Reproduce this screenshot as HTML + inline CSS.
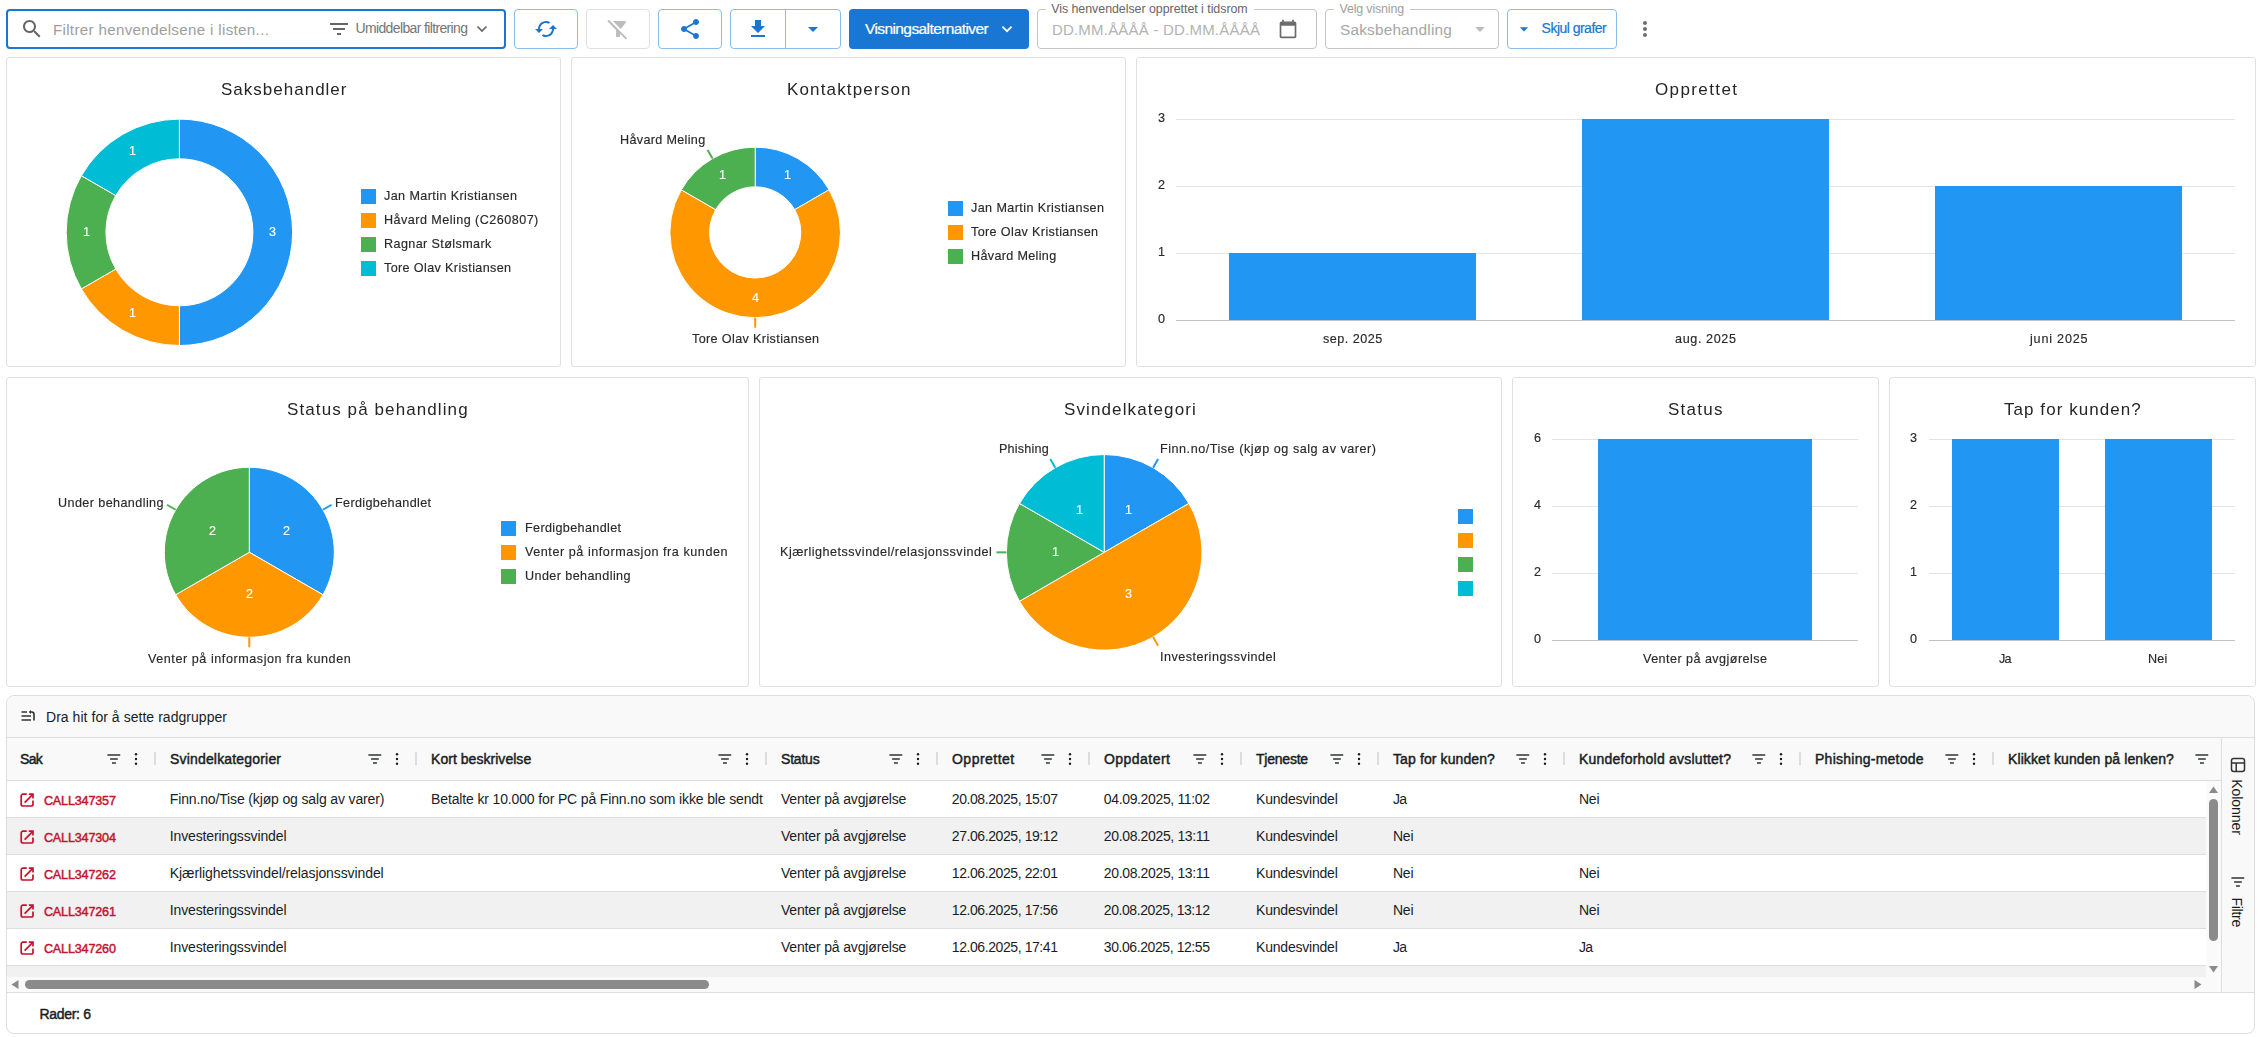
<!DOCTYPE html>
<html lang="no"><head><meta charset="utf-8"><title>Henvendelser</title>
<style>
html,body{margin:0;padding:0;background:#fff;}
body{width:2260px;height:1037px;position:relative;overflow:hidden;font-family:"Liberation Sans", sans-serif;}
.t{position:absolute;white-space:nowrap;line-height:1;font-family:"Liberation Sans", sans-serif;}
svg{display:block;overflow:visible;}
</style></head><body>
<div style="position:absolute;left:6px;top:9px;width:500px;height:40px;box-sizing:border-box;border:2px solid #1976d2;border-radius:4px;background:#fff;"></div>
<svg style="position:absolute;left:20px;top:17px;" width="24" height="24" viewBox="0 0 24 24"><path d="M15.5 14h-.79l-.28-.27C15.41 12.59 16 11.11 16 9.5 16 5.91 13.09 3 9.5 3S3 5.91 3 9.5 5.91 16 9.5 16c1.61 0 3.09-.59 4.23-1.57l.27.28v.79l5 4.99L20.49 19l-4.99-5zm-6 0C7.01 14 5 11.99 5 9.5S7.01 5 9.5 5 14 7.01 14 9.5 11.99 14 9.5 14z" fill="#666"/></svg>
<div class="t" style="left:52.90px;top:22.00px;font-size:15.2px;color:#9e9e9e;letter-spacing:0.313px;">Filtrer henvendelsene i listen...</div>
<svg style="position:absolute;left:327px;top:17px;" width="24" height="24" viewBox="0 0 24 24"><path d="M10 18h4v-2h-4v2zM3 6v2h18V6H3zm3 7h12v-2H6v2z" fill="#666"/></svg>
<div class="t" style="left:355.50px;top:21.00px;font-size:14px;color:#757575;letter-spacing:-0.638px;">Umiddelbar filtrering</div>
<svg style="position:absolute;left:474px;top:22px;" width="16" height="14" viewBox="0 0 16 14"><path d="M3.5 4.5L8 9l4.5-4.5" fill="none" stroke="#666" stroke-width="1.7"/></svg>
<div style="position:absolute;left:514px;top:9px;width:64px;height:40px;box-sizing:border-box;border:1px solid #8cbbe9;border-radius:4px;background:#fff;"></div>
<svg style="position:absolute;left:534px;top:17px;" width="24" height="24" viewBox="0 0 24 24"><path d="M19 8l-4 4h3c0 3.31-2.69 6-6 6-1.01 0-1.97-.25-2.8-.7l-1.46 1.46C8.97 19.54 10.43 20 12 20c4.42 0 8-3.58 8-8h3l-4-4zM6 12c0-3.31 2.69-6 6-6 1.01 0 1.97.25 2.8.7l1.46-1.46C15.03 4.46 13.57 4 12 4c-4.42 0-8 3.58-8 8H1l4 4 4-4H6z" fill="#1976d2"/></svg>
<div style="position:absolute;left:586px;top:9px;width:64px;height:40px;box-sizing:border-box;border:1px solid #e0e0e0;border-radius:4px;background:#fff;"></div>
<svg style="position:absolute;left:606px;top:17px;" width="24" height="24" viewBox="0 0 24 24"><path d="M19.79 5.61C20.3 4.95 19.83 4 19 4H6.83l7.97 7.97 4.99-6.36zM2.81 2.81 1.39 4.22 10 13v6c0 .55.45 1 1 1h2c.55 0 1-.45 1-1v-2.17l5.78 5.78 1.41-1.41L2.81 2.81z" fill="#bdbdbd"/></svg>
<div style="position:absolute;left:658px;top:9px;width:64px;height:40px;box-sizing:border-box;border:1px solid #8cbbe9;border-radius:4px;background:#fff;"></div>
<svg style="position:absolute;left:678px;top:17px;" width="24" height="24" viewBox="0 0 24 24"><path d="M18 16.08c-.76 0-1.44.3-1.96.77L8.91 12.7c.05-.23.09-.46.09-.7s-.04-.47-.09-.7l7.05-4.11c.54.5 1.25.81 2.04.81 1.66 0 3-1.34 3-3s-1.34-3-3-3-3 1.34-3 3c0 .24.04.47.09.7L8.04 9.81C7.5 9.31 6.79 9 6 9c-1.66 0-3 1.34-3 3s1.34 3 3 3c.79 0 1.5-.31 2.04-.81l7.12 4.16c-.05.21-.08.43-.08.65 0 1.61 1.31 2.92 2.92 2.92 1.61 0 2.92-1.31 2.92-2.92s-1.31-2.92-2.92-2.92z" fill="#1976d2"/></svg>
<div style="position:absolute;left:730px;top:9px;width:111px;height:40px;box-sizing:border-box;border:1px solid #8cbbe9;border-radius:4px;background:#fff;"></div>
<div style="position:absolute;left:785px;top:9px;width:1px;height:40px;box-sizing:border-box;background:#8cbbe9;"></div>
<svg style="position:absolute;left:746px;top:17px;" width="24" height="24" viewBox="0 0 24 24"><path d="M5 20h14v-2H5v2zM19 9h-4V3H9v6H5l7 7 7-7z" fill="#1976d2"/></svg>
<svg style="position:absolute;left:801px;top:17px;" width="24" height="24" viewBox="0 0 24 24"><path d="M7 10l5 5 5-5z" fill="#1976d2"/></svg>
<div style="position:absolute;left:849px;top:9px;width:180px;height:40px;box-sizing:border-box;background:#1976d2;border-radius:4px;"></div>
<div class="t" style="left:865.00px;top:21.00px;font-size:15.5px;color:#fff;letter-spacing:-0.594px;-webkit-text-stroke:0.22px currentColor;">Visningsalternativer</div>
<svg style="position:absolute;left:999px;top:22px;" width="16" height="14" viewBox="0 0 16 14"><path d="M3.400 4.600L8 9.200l4.600-4.600" fill="none" stroke="#fff" stroke-width="1.700"/></svg>
<div style="position:absolute;left:1037px;top:9px;width:280px;height:40px;box-sizing:border-box;border:1px solid #c4c4c4;border-radius:4px;background:#fff;"></div>
<div style="position:absolute;left:1046px;top:8px;width:207.5px;height:3px;box-sizing:border-box;background:#fff;"></div>
<div class="t" style="left:1051.20px;top:3.00px;font-size:12.4px;color:#666;letter-spacing:-0.027px;">Vis henvendelser opprettet i tidsrom</div>
<div class="t" style="left:1051.90px;top:22.00px;font-size:15px;color:#b3b3b3;letter-spacing:0.211px;">DD.MM.ÅÅÅÅ - DD.MM.ÅÅÅÅ</div>
<svg style="position:absolute;left:1278px;top:19px;" width="20" height="20" viewBox="0 0 24 24"><path d="M20 3h-1V1h-2v2H7V1H5v2H4c-1.1 0-2 .9-2 2v16c0 1.1.9 2 2 2h16c1.1 0 2-.9 2-2V5c0-1.1-.9-2-2-2zm0 18H4V8h16v13z" fill="#6b6b6b"/></svg>
<div style="position:absolute;left:1325px;top:9px;width:174px;height:40px;box-sizing:border-box;border:1px solid #c4c4c4;border-radius:4px;background:#fff;"></div>
<div style="position:absolute;left:1333.5px;top:8px;width:76px;height:3px;box-sizing:border-box;background:#fff;"></div>
<div class="t" style="left:1339.50px;top:3.00px;font-size:12.4px;color:#a0a0a0;letter-spacing:-0.139px;">Velg visning</div>
<div class="t" style="left:1340.00px;top:22.00px;font-size:15.4px;color:#a6a6a6;letter-spacing:0.175px;">Saksbehandling</div>
<svg style="position:absolute;left:1468px;top:17px;" width="24" height="24" viewBox="0 0 24 24"><path d="M7 10l5 5 5-5z" fill="#bdbdbd"/></svg>
<div style="position:absolute;left:1507px;top:9px;width:110px;height:40px;box-sizing:border-box;border:1px solid #8cbbe9;border-radius:4px;background:#fff;"></div>
<svg style="position:absolute;left:1514.1px;top:18.7px;" width="20" height="20" viewBox="0 0 24 24"><path d="M7 10l5 5 5-5z" fill="#1976d2"/></svg>
<div class="t" style="left:1541.60px;top:21.00px;font-size:14px;color:#1976d2;letter-spacing:-0.519px;-webkit-text-stroke:0.22px currentColor;">Skjul grafer</div>
<svg style="position:absolute;left:1633px;top:17px;" width="24" height="24" viewBox="0 0 24 24"><path d="M12 8c1.1 0 2-.9 2-2s-.9-2-2-2-2 .9-2 2 .9 2 2 2zm0 2c-1.1 0-2 .9-2 2s.9 2 2 2 2-.9 2-2-.9-2-2-2zm0 6c-1.1 0-2 .9-2 2s.9 2 2 2 2-.9 2-2-.9-2-2-2z" fill="#6e6e6e"/></svg>
<div style="position:absolute;left:6px;top:57px;width:555px;height:310px;box-sizing:border-box;border:1px solid #e0e0e0;border-radius:3px;background:#fff;"></div>
<div style="position:absolute;left:571px;top:57px;width:555px;height:310px;box-sizing:border-box;border:1px solid #e0e0e0;border-radius:3px;background:#fff;"></div>
<div style="position:absolute;left:1136px;top:57px;width:1120px;height:310px;box-sizing:border-box;border:1px solid #e0e0e0;border-radius:3px;background:#fff;"></div>
<div style="position:absolute;left:6px;top:377px;width:743px;height:310px;box-sizing:border-box;border:1px solid #e0e0e0;border-radius:3px;background:#fff;"></div>
<div style="position:absolute;left:759px;top:377px;width:743px;height:310px;box-sizing:border-box;border:1px solid #e0e0e0;border-radius:3px;background:#fff;"></div>
<div style="position:absolute;left:1512px;top:377px;width:367px;height:310px;box-sizing:border-box;border:1px solid #e0e0e0;border-radius:3px;background:#fff;"></div>
<div style="position:absolute;left:1889px;top:377px;width:367px;height:310px;box-sizing:border-box;border:1px solid #e0e0e0;border-radius:3px;background:#fff;"></div>
<div class="t" style="left:221.15px;top:81.00px;font-size:17.0px;color:#262626;letter-spacing:1.007px;will-change:transform;">Saksbehandler</div>
<div class="t" style="left:786.65px;top:81.00px;font-size:17.0px;color:#262626;letter-spacing:1.156px;will-change:transform;">Kontaktperson</div>
<div class="t" style="left:1654.80px;top:81.00px;font-size:17.0px;color:#262626;letter-spacing:1.391px;will-change:transform;">Opprettet</div>
<div class="t" style="left:286.80px;top:401.00px;font-size:17.0px;color:#262626;letter-spacing:1.098px;will-change:transform;">Status på behandling</div>
<div class="t" style="left:1064.40px;top:401.00px;font-size:17.0px;color:#262626;letter-spacing:1.112px;will-change:transform;">Svindelkategori</div>
<div class="t" style="left:1668.00px;top:401.00px;font-size:17.0px;color:#262626;letter-spacing:1.241px;will-change:transform;">Status</div>
<div class="t" style="left:2004.05px;top:401.00px;font-size:17.0px;color:#262626;letter-spacing:1.056px;will-change:transform;">Tap for kunden?</div>
<svg style="position:absolute;left:6px;top:57px;" width="555" height="310" viewBox="0 0 555 310"><path d="M173.40 62.10A113.2 113.2 0 0 1 173.40 288.50L173.40 248.80A73.5 73.5 0 0 0 173.40 101.80Z" fill="#2196f3" stroke="#fff" stroke-width="1" stroke-linejoin="round"/><path d="M173.40 288.50A113.2 113.2 0 0 1 75.37 231.90L109.75 212.05A73.5 73.5 0 0 0 173.40 248.80Z" fill="#ff9800" stroke="#fff" stroke-width="1" stroke-linejoin="round"/><path d="M75.37 231.90A113.2 113.2 0 0 1 75.37 118.70L109.75 138.55A73.5 73.5 0 0 0 109.75 212.05Z" fill="#4caf50" stroke="#fff" stroke-width="1" stroke-linejoin="round"/><path d="M75.37 118.70A113.2 113.2 0 0 1 173.40 62.10L173.40 101.80A73.5 73.5 0 0 0 109.75 138.55Z" fill="#00bcd4" stroke="#fff" stroke-width="1" stroke-linejoin="round"/></svg>
<div class="t" style="left:269.25px;top:226.00px;font-size:12.6px;color:#fff;-webkit-text-stroke:0.16px currentColor;will-change:transform;">3</div>
<div class="t" style="left:129.22px;top:307.00px;font-size:12.6px;color:#fff;-webkit-text-stroke:0.16px currentColor;will-change:transform;">1</div>
<div class="t" style="left:82.55px;top:226.00px;font-size:12.6px;color:#fff;-webkit-text-stroke:0.16px currentColor;will-change:transform;">1</div>
<div class="t" style="left:129.22px;top:145.00px;font-size:12.6px;color:#fff;-webkit-text-stroke:0.16px currentColor;will-change:transform;">1</div>
<div style="position:absolute;left:361px;top:189px;width:15px;height:15px;box-sizing:border-box;background:#2196f3;"></div>
<div class="t" style="left:384.30px;top:190.00px;font-size:12.6px;color:#2a2a2a;letter-spacing:0.400px;-webkit-text-stroke:0.16px currentColor;will-change:transform;">Jan Martin Kristiansen</div>
<div style="position:absolute;left:361px;top:213px;width:15px;height:15px;box-sizing:border-box;background:#ff9800;"></div>
<div class="t" style="left:384.30px;top:214.00px;font-size:12.6px;color:#2a2a2a;letter-spacing:0.459px;-webkit-text-stroke:0.16px currentColor;will-change:transform;">Håvard Meling (C260807)</div>
<div style="position:absolute;left:361px;top:237px;width:15px;height:15px;box-sizing:border-box;background:#4caf50;"></div>
<div class="t" style="left:384.30px;top:238.00px;font-size:12.6px;color:#2a2a2a;letter-spacing:0.395px;-webkit-text-stroke:0.16px currentColor;will-change:transform;">Ragnar Stølsmark</div>
<div style="position:absolute;left:361px;top:261px;width:15px;height:15px;box-sizing:border-box;background:#00bcd4;"></div>
<div class="t" style="left:384.30px;top:262.00px;font-size:12.6px;color:#2a2a2a;letter-spacing:0.371px;-webkit-text-stroke:0.16px currentColor;will-change:transform;">Tore Olav Kristiansen</div>
<svg style="position:absolute;left:571px;top:57px;" width="555" height="310" viewBox="0 0 555 310"><path d="M184.20 90.15A85.3 85.3 0 0 1 258.07 132.80L223.69 152.65A45.6 45.6 0 0 0 184.20 129.85Z" fill="#2196f3" stroke="#fff" stroke-width="1" stroke-linejoin="round"/><path d="M258.07 132.80A85.3 85.3 0 1 1 110.33 132.80L144.71 152.65A45.6 45.6 0 1 0 223.69 152.65Z" fill="#ff9800" stroke="#fff" stroke-width="1" stroke-linejoin="round"/><path d="M110.33 132.80A85.3 85.3 0 0 1 184.20 90.15L184.20 129.85A45.6 45.6 0 0 0 144.71 152.65Z" fill="#4caf50" stroke="#fff" stroke-width="1" stroke-linejoin="round"/><path d="M184.20 260.75L184.20 270.75" stroke="#ff9800" stroke-width="2" fill="none"/><path d="M141.55 101.58L136.55 92.92" stroke="#4caf50" stroke-width="2" fill="none"/></svg>
<div class="t" style="left:784.42px;top:169.00px;font-size:12.6px;color:#fff;-webkit-text-stroke:0.16px currentColor;will-change:transform;">1</div>
<div class="t" style="left:751.70px;top:292.00px;font-size:12.6px;color:#fff;-webkit-text-stroke:0.16px currentColor;will-change:transform;">4</div>
<div class="t" style="left:718.97px;top:169.00px;font-size:12.6px;color:#fff;-webkit-text-stroke:0.16px currentColor;will-change:transform;">1</div>
<div class="t" style="left:620.30px;top:134.00px;font-size:12.6px;color:#2a2a2a;letter-spacing:0.334px;-webkit-text-stroke:0.16px currentColor;will-change:transform;">Håvard Meling</div>
<div class="t" style="left:691.55px;top:333.00px;font-size:12.6px;color:#2a2a2a;letter-spacing:0.371px;-webkit-text-stroke:0.16px currentColor;will-change:transform;">Tore Olav Kristiansen</div>
<div style="position:absolute;left:948px;top:201px;width:15px;height:15px;box-sizing:border-box;background:#2196f3;"></div>
<div class="t" style="left:971.20px;top:202.00px;font-size:12.6px;color:#2a2a2a;letter-spacing:0.400px;-webkit-text-stroke:0.16px currentColor;will-change:transform;">Jan Martin Kristiansen</div>
<div style="position:absolute;left:948px;top:225px;width:15px;height:15px;box-sizing:border-box;background:#ff9800;"></div>
<div class="t" style="left:971.20px;top:226.00px;font-size:12.6px;color:#2a2a2a;letter-spacing:0.371px;-webkit-text-stroke:0.16px currentColor;will-change:transform;">Tore Olav Kristiansen</div>
<div style="position:absolute;left:948px;top:249px;width:15px;height:15px;box-sizing:border-box;background:#4caf50;"></div>
<div class="t" style="left:971.20px;top:250.00px;font-size:12.6px;color:#2a2a2a;letter-spacing:0.334px;-webkit-text-stroke:0.16px currentColor;will-change:transform;">Håvard Meling</div>
<div style="position:absolute;left:1176px;top:119px;width:1059px;height:1px;box-sizing:border-box;background:#e3e3e3;"></div>
<div style="position:absolute;left:1176px;top:186px;width:1059px;height:1px;box-sizing:border-box;background:#e3e3e3;"></div>
<div style="position:absolute;left:1176px;top:253px;width:1059px;height:1px;box-sizing:border-box;background:#e3e3e3;"></div>
<div style="position:absolute;left:1229px;top:253.0px;width:247px;height:67.0px;box-sizing:border-box;background:#2196f3;"></div>
<div style="position:absolute;left:1582px;top:119px;width:247px;height:201px;box-sizing:border-box;background:#2196f3;"></div>
<div style="position:absolute;left:1935px;top:186.0px;width:247px;height:134.0px;box-sizing:border-box;background:#2196f3;"></div>
<div style="position:absolute;left:1176px;top:320px;width:1059px;height:1px;box-sizing:border-box;background:#c2c2c2;"></div>
<div class="t" style="left:1157.60px;top:112.00px;font-size:12.6px;color:#2a2a2a;-webkit-text-stroke:0.16px currentColor;will-change:transform;">3</div>
<div class="t" style="left:1157.60px;top:179.00px;font-size:12.6px;color:#2a2a2a;-webkit-text-stroke:0.16px currentColor;will-change:transform;">2</div>
<div class="t" style="left:1157.60px;top:246.00px;font-size:12.6px;color:#2a2a2a;-webkit-text-stroke:0.16px currentColor;will-change:transform;">1</div>
<div class="t" style="left:1157.60px;top:313.00px;font-size:12.6px;color:#2a2a2a;-webkit-text-stroke:0.16px currentColor;will-change:transform;">0</div>
<div class="t" style="left:1322.65px;top:333.00px;font-size:12.6px;color:#2a2a2a;letter-spacing:0.498px;-webkit-text-stroke:0.16px currentColor;will-change:transform;">sep. 2025</div>
<div class="t" style="left:1674.80px;top:333.00px;font-size:12.6px;color:#2a2a2a;letter-spacing:0.622px;-webkit-text-stroke:0.16px currentColor;will-change:transform;">aug. 2025</div>
<div class="t" style="left:2029.55px;top:333.00px;font-size:12.6px;color:#2a2a2a;letter-spacing:0.798px;-webkit-text-stroke:0.16px currentColor;will-change:transform;">juni 2025</div>
<div style="position:absolute;left:1552px;top:439px;width:306px;height:1px;box-sizing:border-box;background:#e3e3e3;"></div>
<div style="position:absolute;left:1552px;top:506px;width:306px;height:1px;box-sizing:border-box;background:#e3e3e3;"></div>
<div style="position:absolute;left:1552px;top:573px;width:306px;height:1px;box-sizing:border-box;background:#e3e3e3;"></div>
<div style="position:absolute;left:1598px;top:439px;width:214px;height:201px;box-sizing:border-box;background:#2196f3;"></div>
<div style="position:absolute;left:1552px;top:640px;width:306px;height:1px;box-sizing:border-box;background:#c2c2c2;"></div>
<div class="t" style="left:1533.50px;top:432.00px;font-size:12.6px;color:#2a2a2a;-webkit-text-stroke:0.16px currentColor;will-change:transform;">6</div>
<div class="t" style="left:1533.50px;top:499.00px;font-size:12.6px;color:#2a2a2a;-webkit-text-stroke:0.16px currentColor;will-change:transform;">4</div>
<div class="t" style="left:1533.50px;top:566.00px;font-size:12.6px;color:#2a2a2a;-webkit-text-stroke:0.16px currentColor;will-change:transform;">2</div>
<div class="t" style="left:1533.50px;top:633.00px;font-size:12.6px;color:#2a2a2a;-webkit-text-stroke:0.16px currentColor;will-change:transform;">0</div>
<div class="t" style="left:1643.00px;top:653.00px;font-size:12.6px;color:#2a2a2a;letter-spacing:0.447px;-webkit-text-stroke:0.16px currentColor;will-change:transform;">Venter på avgjørelse</div>
<div style="position:absolute;left:1929px;top:439px;width:306px;height:1px;box-sizing:border-box;background:#e3e3e3;"></div>
<div style="position:absolute;left:1929px;top:506px;width:306px;height:1px;box-sizing:border-box;background:#e3e3e3;"></div>
<div style="position:absolute;left:1929px;top:573px;width:306px;height:1px;box-sizing:border-box;background:#e3e3e3;"></div>
<div style="position:absolute;left:1952px;top:439px;width:107px;height:201px;box-sizing:border-box;background:#2196f3;"></div>
<div style="position:absolute;left:2105px;top:439px;width:107px;height:201px;box-sizing:border-box;background:#2196f3;"></div>
<div style="position:absolute;left:1929px;top:640px;width:306px;height:1px;box-sizing:border-box;background:#c2c2c2;"></div>
<div class="t" style="left:1910.40px;top:432.00px;font-size:12.6px;color:#2a2a2a;-webkit-text-stroke:0.16px currentColor;will-change:transform;">3</div>
<div class="t" style="left:1910.40px;top:499.00px;font-size:12.6px;color:#2a2a2a;-webkit-text-stroke:0.16px currentColor;will-change:transform;">2</div>
<div class="t" style="left:1910.40px;top:566.00px;font-size:12.6px;color:#2a2a2a;-webkit-text-stroke:0.16px currentColor;will-change:transform;">1</div>
<div class="t" style="left:1910.40px;top:633.00px;font-size:12.6px;color:#2a2a2a;-webkit-text-stroke:0.16px currentColor;will-change:transform;">0</div>
<div class="t" style="left:1998.70px;top:653.00px;font-size:12.6px;color:#2a2a2a;letter-spacing:-0.700px;-webkit-text-stroke:0.16px currentColor;will-change:transform;">Ja</div>
<div class="t" style="left:2148.40px;top:653.00px;font-size:12.6px;color:#2a2a2a;letter-spacing:0.152px;-webkit-text-stroke:0.16px currentColor;will-change:transform;">Nei</div>
<svg style="position:absolute;left:6px;top:377px;" width="743" height="310" viewBox="0 0 743 310"><path d="M243.3 175.25L243.30 90.25A85 85 0 0 1 316.91 217.75Z" fill="#2196f3" stroke="#fff" stroke-width="1" stroke-linejoin="round"/><path d="M243.3 175.25L316.91 217.75A85 85 0 0 1 169.69 217.75Z" fill="#ff9800" stroke="#fff" stroke-width="1" stroke-linejoin="round"/><path d="M243.3 175.25L169.69 217.75A85 85 0 0 1 243.30 90.25Z" fill="#4caf50" stroke="#fff" stroke-width="1" stroke-linejoin="round"/><path d="M316.91 132.75L325.57 127.75" stroke="#2196f3" stroke-width="2" fill="none"/><path d="M243.30 260.25L243.30 270.25" stroke="#ff9800" stroke-width="2" fill="none"/><path d="M169.69 132.75L161.03 127.75" stroke="#4caf50" stroke-width="2" fill="none"/></svg>
<div class="t" style="left:282.60px;top:525.00px;font-size:12.6px;color:#fff;-webkit-text-stroke:0.16px currentColor;will-change:transform;">2</div>
<div class="t" style="left:245.80px;top:588.00px;font-size:12.6px;color:#fff;-webkit-text-stroke:0.16px currentColor;will-change:transform;">2</div>
<div class="t" style="left:208.99px;top:525.00px;font-size:12.6px;color:#fff;-webkit-text-stroke:0.16px currentColor;will-change:transform;">2</div>
<div class="t" style="left:334.60px;top:497.00px;font-size:12.6px;color:#2a2a2a;letter-spacing:0.356px;-webkit-text-stroke:0.16px currentColor;will-change:transform;">Ferdigbehandlet</div>
<div class="t" style="left:57.90px;top:497.00px;font-size:12.6px;color:#2a2a2a;letter-spacing:0.405px;-webkit-text-stroke:0.16px currentColor;will-change:transform;">Under behandling</div>
<div class="t" style="left:147.85px;top:653.00px;font-size:12.6px;color:#2a2a2a;letter-spacing:0.554px;-webkit-text-stroke:0.16px currentColor;will-change:transform;">Venter på informasjon fra kunden</div>
<div style="position:absolute;left:501px;top:521px;width:15px;height:15px;box-sizing:border-box;background:#2196f3;"></div>
<div class="t" style="left:524.50px;top:522.00px;font-size:12.6px;color:#2a2a2a;letter-spacing:0.356px;-webkit-text-stroke:0.16px currentColor;will-change:transform;">Ferdigbehandlet</div>
<div style="position:absolute;left:501px;top:545px;width:15px;height:15px;box-sizing:border-box;background:#ff9800;"></div>
<div class="t" style="left:524.50px;top:546.00px;font-size:12.6px;color:#2a2a2a;letter-spacing:0.548px;-webkit-text-stroke:0.16px currentColor;will-change:transform;">Venter på informasjon fra kunden</div>
<div style="position:absolute;left:501px;top:569px;width:15px;height:15px;box-sizing:border-box;background:#4caf50;"></div>
<div class="t" style="left:524.50px;top:570.00px;font-size:12.6px;color:#2a2a2a;letter-spacing:0.405px;-webkit-text-stroke:0.16px currentColor;will-change:transform;">Under behandling</div>
<svg style="position:absolute;left:759px;top:377px;" width="743" height="310" viewBox="0 0 743 310"><path d="M345.20000000000005 175.35000000000002L345.20 77.55A97.8 97.8 0 0 1 429.90 126.45Z" fill="#2196f3" stroke="#fff" stroke-width="1" stroke-linejoin="round"/><path d="M345.20000000000005 175.35000000000002L429.90 126.45A97.8 97.8 0 0 1 260.50 224.25Z" fill="#ff9800" stroke="#fff" stroke-width="1" stroke-linejoin="round"/><path d="M345.20000000000005 175.35000000000002L260.50 224.25A97.8 97.8 0 0 1 260.50 126.45Z" fill="#4caf50" stroke="#fff" stroke-width="1" stroke-linejoin="round"/><path d="M345.20000000000005 175.35000000000002L260.50 126.45A97.8 97.8 0 0 1 345.20 77.55Z" fill="#00bcd4" stroke="#fff" stroke-width="1" stroke-linejoin="round"/><path d="M394.10 90.65L399.10 81.99" stroke="#2196f3" stroke-width="2" fill="none"/><path d="M394.10 260.05L399.10 268.71" stroke="#ff9800" stroke-width="2" fill="none"/><path d="M247.40 175.35L237.40 175.35" stroke="#4caf50" stroke-width="2" fill="none"/><path d="M296.30 90.65L291.30 81.99" stroke="#00bcd4" stroke-width="2" fill="none"/></svg>
<div class="t" style="left:1125.15px;top:504.00px;font-size:12.6px;color:#fff;-webkit-text-stroke:0.16px currentColor;will-change:transform;">1</div>
<div class="t" style="left:1125.15px;top:588.00px;font-size:12.6px;color:#fff;-webkit-text-stroke:0.16px currentColor;will-change:transform;">3</div>
<div class="t" style="left:1051.80px;top:546.00px;font-size:12.6px;color:#fff;-webkit-text-stroke:0.16px currentColor;will-change:transform;">1</div>
<div class="t" style="left:1076.25px;top:504.00px;font-size:12.6px;color:#fff;-webkit-text-stroke:0.16px currentColor;will-change:transform;">1</div>
<div class="t" style="left:1160.10px;top:443.00px;font-size:12.6px;color:#2a2a2a;letter-spacing:0.526px;-webkit-text-stroke:0.16px currentColor;will-change:transform;">Finn.no/Tise (kjøp og salg av varer)</div>
<div class="t" style="left:998.50px;top:443.00px;font-size:12.6px;color:#2a2a2a;letter-spacing:0.199px;-webkit-text-stroke:0.16px currentColor;will-change:transform;">Phishing</div>
<div class="t" style="left:780.30px;top:546.00px;font-size:12.6px;color:#2a2a2a;letter-spacing:0.482px;-webkit-text-stroke:0.16px currentColor;will-change:transform;">Kjærlighetssvindel/relasjonssvindel</div>
<div class="t" style="left:1160.10px;top:651.00px;font-size:12.6px;color:#2a2a2a;letter-spacing:0.478px;-webkit-text-stroke:0.16px currentColor;will-change:transform;">Investeringssvindel</div>
<div style="position:absolute;left:1458px;top:509px;width:15px;height:15px;box-sizing:border-box;background:#2196f3;"></div>
<div style="position:absolute;left:1458px;top:533px;width:15px;height:15px;box-sizing:border-box;background:#ff9800;"></div>
<div style="position:absolute;left:1458px;top:557px;width:15px;height:15px;box-sizing:border-box;background:#4caf50;"></div>
<div style="position:absolute;left:1458px;top:581px;width:15px;height:15px;box-sizing:border-box;background:#00bcd4;"></div>
<div style="position:absolute;left:6px;top:695px;width:2249px;height:339px;box-sizing:border-box;border:1px solid #dddddd;border-radius:8px;background:#fff;overflow:hidden;"></div>
<div style="position:absolute;left:7px;top:696px;width:2247px;height:42px;box-sizing:border-box;background:#f9f9f9;border-radius:7px 7px 0 0;"></div>
<div style="position:absolute;left:7px;top:737px;width:2247px;height:1px;box-sizing:border-box;background:#dddddd;"></div>
<svg style="position:absolute;left:20px;top:708px;" width="16" height="16" viewBox="0 0 16 16"><g fill="none" stroke="#2f3436" stroke-width="1.600"><path d="M1.500 4H7M1.500 8H11M1.500 12H11"/><path d="M14 12.400V6.300Q14 4 11.700 4H10.300"/></g><path d="M8.600 4L11 2.100V5.900z" fill="#2f3436"/></svg>
<div class="t" style="left:46.00px;top:710.00px;font-size:14px;color:#181d1f;letter-spacing:0.043px;">Dra hit for å sette radgrupper</div>
<div style="position:absolute;left:7px;top:738px;width:2214px;height:42px;box-sizing:border-box;background:#f9f9f9;"></div>
<div style="position:absolute;left:7px;top:780px;width:2214px;height:1px;box-sizing:border-box;background:#dddddd;"></div>
<div class="t" style="left:20.00px;top:752.00px;font-size:14px;color:#181d1f;letter-spacing:-0.700px;-webkit-text-stroke:0.45px currentColor;">Sak</div>
<div class="t" style="left:170.00px;top:752.00px;font-size:14px;color:#181d1f;letter-spacing:0.177px;-webkit-text-stroke:0.45px currentColor;">Svindelkategorier</div>
<div class="t" style="left:431.00px;top:752.00px;font-size:14px;color:#181d1f;letter-spacing:0.040px;-webkit-text-stroke:0.45px currentColor;">Kort beskrivelse</div>
<div class="t" style="left:781.00px;top:752.00px;font-size:14px;color:#181d1f;letter-spacing:-0.198px;-webkit-text-stroke:0.45px currentColor;">Status</div>
<div class="t" style="left:952.00px;top:752.00px;font-size:14px;color:#181d1f;letter-spacing:0.479px;-webkit-text-stroke:0.45px currentColor;">Opprettet</div>
<div class="t" style="left:1104.00px;top:752.00px;font-size:14px;color:#181d1f;letter-spacing:0.455px;-webkit-text-stroke:0.45px currentColor;">Oppdatert</div>
<div class="t" style="left:1256.00px;top:752.00px;font-size:14px;color:#181d1f;letter-spacing:-0.228px;-webkit-text-stroke:0.45px currentColor;">Tjeneste</div>
<div class="t" style="left:1393.00px;top:752.00px;font-size:14px;color:#181d1f;letter-spacing:0.107px;-webkit-text-stroke:0.45px currentColor;">Tap for kunden?</div>
<div class="t" style="left:1579.00px;top:752.00px;font-size:14px;color:#181d1f;letter-spacing:0.223px;-webkit-text-stroke:0.45px currentColor;">Kundeforhold avsluttet?</div>
<div class="t" style="left:1815.00px;top:752.00px;font-size:14px;color:#181d1f;letter-spacing:0.253px;-webkit-text-stroke:0.45px currentColor;">Phishing-metode</div>
<div class="t" style="left:2008.00px;top:752.00px;font-size:14px;color:#181d1f;letter-spacing:0.098px;-webkit-text-stroke:0.45px currentColor;">Klikket kunden på lenken?</div>
<div style="position:absolute;left:154px;top:752px;width:2px;height:13px;box-sizing:border-box;background:#dddddd;"></div>
<svg style="position:absolute;left:107px;top:753px;" width="14" height="13" viewBox="0 0 14 13"><path d="M0.400 2H13.250M3.100 6H10.800M5 10H8.900" stroke="#2f3436" stroke-width="1.700" fill="none"/></svg>
<svg style="position:absolute;left:134px;top:752px;" width="4" height="15" viewBox="0 0 4 15"><circle cx="2" cy="2.300" r="1.200" fill="#1c1c1c"/><circle cx="2" cy="7.050" r="1.200" fill="#1c1c1c"/><circle cx="2" cy="11.700" r="1.200" fill="#1c1c1c"/></svg>
<div style="position:absolute;left:415px;top:752px;width:2px;height:13px;box-sizing:border-box;background:#dddddd;"></div>
<svg style="position:absolute;left:368px;top:753px;" width="14" height="13" viewBox="0 0 14 13"><path d="M0.400 2H13.250M3.100 6H10.800M5 10H8.900" stroke="#2f3436" stroke-width="1.700" fill="none"/></svg>
<svg style="position:absolute;left:395px;top:752px;" width="4" height="15" viewBox="0 0 4 15"><circle cx="2" cy="2.300" r="1.200" fill="#1c1c1c"/><circle cx="2" cy="7.050" r="1.200" fill="#1c1c1c"/><circle cx="2" cy="11.700" r="1.200" fill="#1c1c1c"/></svg>
<div style="position:absolute;left:765px;top:752px;width:2px;height:13px;box-sizing:border-box;background:#dddddd;"></div>
<svg style="position:absolute;left:718px;top:753px;" width="14" height="13" viewBox="0 0 14 13"><path d="M0.400 2H13.250M3.100 6H10.800M5 10H8.900" stroke="#2f3436" stroke-width="1.700" fill="none"/></svg>
<svg style="position:absolute;left:745px;top:752px;" width="4" height="15" viewBox="0 0 4 15"><circle cx="2" cy="2.300" r="1.200" fill="#1c1c1c"/><circle cx="2" cy="7.050" r="1.200" fill="#1c1c1c"/><circle cx="2" cy="11.700" r="1.200" fill="#1c1c1c"/></svg>
<div style="position:absolute;left:936px;top:752px;width:2px;height:13px;box-sizing:border-box;background:#dddddd;"></div>
<svg style="position:absolute;left:889px;top:753px;" width="14" height="13" viewBox="0 0 14 13"><path d="M0.400 2H13.250M3.100 6H10.800M5 10H8.900" stroke="#2f3436" stroke-width="1.700" fill="none"/></svg>
<svg style="position:absolute;left:916px;top:752px;" width="4" height="15" viewBox="0 0 4 15"><circle cx="2" cy="2.300" r="1.200" fill="#1c1c1c"/><circle cx="2" cy="7.050" r="1.200" fill="#1c1c1c"/><circle cx="2" cy="11.700" r="1.200" fill="#1c1c1c"/></svg>
<div style="position:absolute;left:1088px;top:752px;width:2px;height:13px;box-sizing:border-box;background:#dddddd;"></div>
<svg style="position:absolute;left:1041px;top:753px;" width="14" height="13" viewBox="0 0 14 13"><path d="M0.400 2H13.250M3.100 6H10.800M5 10H8.900" stroke="#2f3436" stroke-width="1.700" fill="none"/></svg>
<svg style="position:absolute;left:1068px;top:752px;" width="4" height="15" viewBox="0 0 4 15"><circle cx="2" cy="2.300" r="1.200" fill="#1c1c1c"/><circle cx="2" cy="7.050" r="1.200" fill="#1c1c1c"/><circle cx="2" cy="11.700" r="1.200" fill="#1c1c1c"/></svg>
<div style="position:absolute;left:1240px;top:752px;width:2px;height:13px;box-sizing:border-box;background:#dddddd;"></div>
<svg style="position:absolute;left:1193px;top:753px;" width="14" height="13" viewBox="0 0 14 13"><path d="M0.400 2H13.250M3.100 6H10.800M5 10H8.900" stroke="#2f3436" stroke-width="1.700" fill="none"/></svg>
<svg style="position:absolute;left:1220px;top:752px;" width="4" height="15" viewBox="0 0 4 15"><circle cx="2" cy="2.300" r="1.200" fill="#1c1c1c"/><circle cx="2" cy="7.050" r="1.200" fill="#1c1c1c"/><circle cx="2" cy="11.700" r="1.200" fill="#1c1c1c"/></svg>
<div style="position:absolute;left:1377px;top:752px;width:2px;height:13px;box-sizing:border-box;background:#dddddd;"></div>
<svg style="position:absolute;left:1330px;top:753px;" width="14" height="13" viewBox="0 0 14 13"><path d="M0.400 2H13.250M3.100 6H10.800M5 10H8.900" stroke="#2f3436" stroke-width="1.700" fill="none"/></svg>
<svg style="position:absolute;left:1357px;top:752px;" width="4" height="15" viewBox="0 0 4 15"><circle cx="2" cy="2.300" r="1.200" fill="#1c1c1c"/><circle cx="2" cy="7.050" r="1.200" fill="#1c1c1c"/><circle cx="2" cy="11.700" r="1.200" fill="#1c1c1c"/></svg>
<div style="position:absolute;left:1563px;top:752px;width:2px;height:13px;box-sizing:border-box;background:#dddddd;"></div>
<svg style="position:absolute;left:1516px;top:753px;" width="14" height="13" viewBox="0 0 14 13"><path d="M0.400 2H13.250M3.100 6H10.800M5 10H8.900" stroke="#2f3436" stroke-width="1.700" fill="none"/></svg>
<svg style="position:absolute;left:1543px;top:752px;" width="4" height="15" viewBox="0 0 4 15"><circle cx="2" cy="2.300" r="1.200" fill="#1c1c1c"/><circle cx="2" cy="7.050" r="1.200" fill="#1c1c1c"/><circle cx="2" cy="11.700" r="1.200" fill="#1c1c1c"/></svg>
<div style="position:absolute;left:1799px;top:752px;width:2px;height:13px;box-sizing:border-box;background:#dddddd;"></div>
<svg style="position:absolute;left:1752px;top:753px;" width="14" height="13" viewBox="0 0 14 13"><path d="M0.400 2H13.250M3.100 6H10.800M5 10H8.900" stroke="#2f3436" stroke-width="1.700" fill="none"/></svg>
<svg style="position:absolute;left:1779px;top:752px;" width="4" height="15" viewBox="0 0 4 15"><circle cx="2" cy="2.300" r="1.200" fill="#1c1c1c"/><circle cx="2" cy="7.050" r="1.200" fill="#1c1c1c"/><circle cx="2" cy="11.700" r="1.200" fill="#1c1c1c"/></svg>
<div style="position:absolute;left:1992px;top:752px;width:2px;height:13px;box-sizing:border-box;background:#dddddd;"></div>
<svg style="position:absolute;left:1945px;top:753px;" width="14" height="13" viewBox="0 0 14 13"><path d="M0.400 2H13.250M3.100 6H10.800M5 10H8.900" stroke="#2f3436" stroke-width="1.700" fill="none"/></svg>
<svg style="position:absolute;left:1972px;top:752px;" width="4" height="15" viewBox="0 0 4 15"><circle cx="2" cy="2.300" r="1.200" fill="#1c1c1c"/><circle cx="2" cy="7.050" r="1.200" fill="#1c1c1c"/><circle cx="2" cy="11.700" r="1.200" fill="#1c1c1c"/></svg>
<svg style="position:absolute;left:2194.5px;top:753px;" width="14" height="13" viewBox="0 0 14 13"><path d="M0.400 2H13.250M3.100 6H10.800M5 10H8.900" stroke="#2f3436" stroke-width="1.700" fill="none"/></svg>
<div style="position:absolute;left:7px;top:781px;width:2199px;height:36px;box-sizing:border-box;background:#fff;"></div>
<div style="position:absolute;left:7px;top:817px;width:2199px;height:1px;box-sizing:border-box;background:#dddddd;"></div>
<svg style="position:absolute;left:20px;top:793px;" width="14.2" height="14.2" viewBox="0 0 14.2 14.2"><g fill="none" stroke="#c8102e" stroke-width="1.7"><path d="M6.8 1.2H3A1.8 1.8 0 0 0 1.2 3v8.2A1.8 1.8 0 0 0 3 13h8.200a1.800 1.800 0 0 0 1.800-1.800V7.600"/><path d="M4.600 9.600L12.600 1.600"/><path d="M8.800 1.200h4.200v4.200"/></g></svg>
<div class="t" style="left:43.90px;top:795.00px;font-size:12.6px;color:#c4122f;letter-spacing:-0.170px;-webkit-text-stroke:0.45px currentColor;">CALL347357</div>
<div class="t" style="left:169.80px;top:792.00px;font-size:14px;color:#181d1f;letter-spacing:-0.145px;">Finn.no/Tise (kjøp og salg av varer)</div>
<div class="t" style="left:431.10px;top:792.00px;font-size:14px;color:#181d1f;letter-spacing:-0.143px;">Betalte kr 10.000 for PC på Finn.no som ikke ble sendt</div>
<div class="t" style="left:780.90px;top:792.00px;font-size:14px;color:#181d1f;letter-spacing:-0.153px;">Venter på avgjørelse</div>
<div class="t" style="left:951.80px;top:792.00px;font-size:14px;color:#181d1f;letter-spacing:-0.418px;">20.08.2025, 15:07</div>
<div class="t" style="left:1103.80px;top:792.00px;font-size:14px;color:#181d1f;letter-spacing:-0.353px;">04.09.2025, 11:02</div>
<div class="t" style="left:1256.10px;top:792.00px;font-size:14px;color:#181d1f;letter-spacing:-0.215px;">Kundesvindel</div>
<div class="t" style="left:1393.00px;top:792.00px;font-size:14px;color:#181d1f;letter-spacing:-0.700px;">Ja</div>
<div class="t" style="left:1579.00px;top:792.00px;font-size:14px;color:#181d1f;letter-spacing:-0.253px;">Nei</div>
<div style="position:absolute;left:7px;top:818px;width:2199px;height:36px;box-sizing:border-box;background:#f1f1f1;"></div>
<div style="position:absolute;left:7px;top:854px;width:2199px;height:1px;box-sizing:border-box;background:#dddddd;"></div>
<svg style="position:absolute;left:20px;top:830px;" width="14.2" height="14.2" viewBox="0 0 14.2 14.2"><g fill="none" stroke="#c8102e" stroke-width="1.7"><path d="M6.8 1.2H3A1.8 1.8 0 0 0 1.2 3v8.2A1.8 1.8 0 0 0 3 13h8.200a1.800 1.800 0 0 0 1.800-1.800V7.600"/><path d="M4.600 9.600L12.600 1.600"/><path d="M8.800 1.200h4.200v4.200"/></g></svg>
<div class="t" style="left:43.90px;top:832.00px;font-size:12.6px;color:#c4122f;letter-spacing:-0.170px;-webkit-text-stroke:0.45px currentColor;">CALL347304</div>
<div class="t" style="left:169.80px;top:829.00px;font-size:14px;color:#181d1f;letter-spacing:-0.131px;">Investeringssvindel</div>
<div class="t" style="left:780.90px;top:829.00px;font-size:14px;color:#181d1f;letter-spacing:-0.153px;">Venter på avgjørelse</div>
<div class="t" style="left:951.80px;top:829.00px;font-size:14px;color:#181d1f;letter-spacing:-0.418px;">27.06.2025, 19:12</div>
<div class="t" style="left:1103.80px;top:829.00px;font-size:14px;color:#181d1f;letter-spacing:-0.353px;">20.08.2025, 13:11</div>
<div class="t" style="left:1256.10px;top:829.00px;font-size:14px;color:#181d1f;letter-spacing:-0.215px;">Kundesvindel</div>
<div class="t" style="left:1393.00px;top:829.00px;font-size:14px;color:#181d1f;letter-spacing:-0.253px;">Nei</div>
<div style="position:absolute;left:7px;top:855px;width:2199px;height:36px;box-sizing:border-box;background:#fff;"></div>
<div style="position:absolute;left:7px;top:891px;width:2199px;height:1px;box-sizing:border-box;background:#dddddd;"></div>
<svg style="position:absolute;left:20px;top:867px;" width="14.2" height="14.2" viewBox="0 0 14.2 14.2"><g fill="none" stroke="#c8102e" stroke-width="1.7"><path d="M6.8 1.2H3A1.8 1.8 0 0 0 1.2 3v8.2A1.8 1.8 0 0 0 3 13h8.200a1.800 1.800 0 0 0 1.800-1.800V7.600"/><path d="M4.600 9.600L12.600 1.600"/><path d="M8.800 1.200h4.200v4.200"/></g></svg>
<div class="t" style="left:43.90px;top:869.00px;font-size:12.6px;color:#c4122f;letter-spacing:-0.170px;-webkit-text-stroke:0.45px currentColor;">CALL347262</div>
<div class="t" style="left:169.80px;top:866.00px;font-size:14px;color:#181d1f;letter-spacing:-0.094px;">Kjærlighetssvindel/relasjonssvindel</div>
<div class="t" style="left:780.90px;top:866.00px;font-size:14px;color:#181d1f;letter-spacing:-0.153px;">Venter på avgjørelse</div>
<div class="t" style="left:951.80px;top:866.00px;font-size:14px;color:#181d1f;letter-spacing:-0.418px;">12.06.2025, 22:01</div>
<div class="t" style="left:1103.80px;top:866.00px;font-size:14px;color:#181d1f;letter-spacing:-0.353px;">20.08.2025, 13:11</div>
<div class="t" style="left:1256.10px;top:866.00px;font-size:14px;color:#181d1f;letter-spacing:-0.215px;">Kundesvindel</div>
<div class="t" style="left:1393.00px;top:866.00px;font-size:14px;color:#181d1f;letter-spacing:-0.253px;">Nei</div>
<div class="t" style="left:1579.00px;top:866.00px;font-size:14px;color:#181d1f;letter-spacing:-0.253px;">Nei</div>
<div style="position:absolute;left:7px;top:892px;width:2199px;height:36px;box-sizing:border-box;background:#f1f1f1;"></div>
<div style="position:absolute;left:7px;top:928px;width:2199px;height:1px;box-sizing:border-box;background:#dddddd;"></div>
<svg style="position:absolute;left:20px;top:904px;" width="14.2" height="14.2" viewBox="0 0 14.2 14.2"><g fill="none" stroke="#c8102e" stroke-width="1.7"><path d="M6.8 1.2H3A1.8 1.8 0 0 0 1.2 3v8.2A1.8 1.8 0 0 0 3 13h8.200a1.800 1.800 0 0 0 1.800-1.800V7.600"/><path d="M4.600 9.600L12.600 1.600"/><path d="M8.800 1.200h4.200v4.200"/></g></svg>
<div class="t" style="left:43.90px;top:906.00px;font-size:12.6px;color:#c4122f;letter-spacing:-0.170px;-webkit-text-stroke:0.45px currentColor;">CALL347261</div>
<div class="t" style="left:169.80px;top:903.00px;font-size:14px;color:#181d1f;letter-spacing:-0.131px;">Investeringssvindel</div>
<div class="t" style="left:780.90px;top:903.00px;font-size:14px;color:#181d1f;letter-spacing:-0.153px;">Venter på avgjørelse</div>
<div class="t" style="left:951.80px;top:903.00px;font-size:14px;color:#181d1f;letter-spacing:-0.418px;">12.06.2025, 17:56</div>
<div class="t" style="left:1103.80px;top:903.00px;font-size:14px;color:#181d1f;letter-spacing:-0.418px;">20.08.2025, 13:12</div>
<div class="t" style="left:1256.10px;top:903.00px;font-size:14px;color:#181d1f;letter-spacing:-0.215px;">Kundesvindel</div>
<div class="t" style="left:1393.00px;top:903.00px;font-size:14px;color:#181d1f;letter-spacing:-0.253px;">Nei</div>
<div class="t" style="left:1579.00px;top:903.00px;font-size:14px;color:#181d1f;letter-spacing:-0.253px;">Nei</div>
<div style="position:absolute;left:7px;top:929px;width:2199px;height:36px;box-sizing:border-box;background:#fff;"></div>
<div style="position:absolute;left:7px;top:965px;width:2199px;height:1px;box-sizing:border-box;background:#dddddd;"></div>
<svg style="position:absolute;left:20px;top:941px;" width="14.2" height="14.2" viewBox="0 0 14.2 14.2"><g fill="none" stroke="#c8102e" stroke-width="1.7"><path d="M6.8 1.2H3A1.8 1.8 0 0 0 1.2 3v8.2A1.8 1.8 0 0 0 3 13h8.200a1.800 1.800 0 0 0 1.800-1.800V7.600"/><path d="M4.600 9.600L12.600 1.600"/><path d="M8.800 1.200h4.200v4.200"/></g></svg>
<div class="t" style="left:43.90px;top:943.00px;font-size:12.6px;color:#c4122f;letter-spacing:-0.170px;-webkit-text-stroke:0.45px currentColor;">CALL347260</div>
<div class="t" style="left:169.80px;top:940.00px;font-size:14px;color:#181d1f;letter-spacing:-0.131px;">Investeringssvindel</div>
<div class="t" style="left:780.90px;top:940.00px;font-size:14px;color:#181d1f;letter-spacing:-0.153px;">Venter på avgjørelse</div>
<div class="t" style="left:951.80px;top:940.00px;font-size:14px;color:#181d1f;letter-spacing:-0.418px;">12.06.2025, 17:41</div>
<div class="t" style="left:1103.80px;top:940.00px;font-size:14px;color:#181d1f;letter-spacing:-0.418px;">30.06.2025, 12:55</div>
<div class="t" style="left:1256.10px;top:940.00px;font-size:14px;color:#181d1f;letter-spacing:-0.215px;">Kundesvindel</div>
<div class="t" style="left:1393.00px;top:940.00px;font-size:14px;color:#181d1f;letter-spacing:-0.700px;">Ja</div>
<div class="t" style="left:1579.00px;top:940.00px;font-size:14px;color:#181d1f;letter-spacing:-0.700px;">Ja</div>
<div style="position:absolute;left:7px;top:966px;width:2199px;height:11px;box-sizing:border-box;background:#f1f1f1;"></div>
<div style="position:absolute;left:2206px;top:781px;width:15px;height:196px;box-sizing:border-box;background:#fafafa;"></div>
<svg style="position:absolute;left:2208px;top:785px;" width="11" height="9" viewBox="0 0 11 9"><path d="M1 8L5.500 1.500 10 8z" fill="#8b8b8b"/></svg>
<div style="position:absolute;left:2209px;top:799px;width:9px;height:142px;box-sizing:border-box;background:#8b8b8b;border-radius:4.5px;"></div>
<svg style="position:absolute;left:2208px;top:965px;" width="11" height="9" viewBox="0 0 11 9"><path d="M1 1L5.500 7.500 10 1z" fill="#8b8b8b"/></svg>
<div style="position:absolute;left:7px;top:977px;width:2214px;height:15px;box-sizing:border-box;background:#fafafa;"></div>
<svg style="position:absolute;left:10px;top:979px;" width="10" height="11" viewBox="0 0 10 11"><path d="M8.500 1L1.500 5.500 8.500 10z" fill="#8b8b8b"/></svg>
<div style="position:absolute;left:25px;top:980px;width:684px;height:9px;box-sizing:border-box;background:#8b8b8b;border-radius:4.5px;"></div>
<svg style="position:absolute;left:2193px;top:979px;" width="10" height="11" viewBox="0 0 10 11"><path d="M1.500 1L8.500 5.500 1.500 10z" fill="#8b8b8b"/></svg>
<div style="position:absolute;left:7px;top:992px;width:2247px;height:1px;box-sizing:border-box;background:#dddddd;"></div>
<div style="position:absolute;left:2221px;top:738px;width:33px;height:254px;box-sizing:border-box;background:#f9f9f9;border-left:1px solid #dddddd;"></div>
<svg style="position:absolute;left:2230px;top:757px;" width="16" height="16" viewBox="0 0 16 16"><g fill="none" stroke="#333" stroke-width="1.5"><rect x="1.500" y="1.500" width="13" height="13" rx="2.200"/><path d="M1.500 6h13M6.200 6v8.500"/></g></svg>
<div class="t" style="left:0.00px;top:-12.00px;font-size:14px;color:#181d1f;letter-spacing:-0.034px;transform-origin:0 0;transform:translate(2244.2px,779.2px) rotate(90deg);left:0;top:0;">Kolonner</div>
<svg style="position:absolute;left:2231px;top:876px;" width="14" height="13" viewBox="0 0 14 13"><path d="M0.400 2H13.250M3.100 6H10.800M5 10H8.900" stroke="#2f3436" stroke-width="1.700" fill="none"/></svg>
<div class="t" style="left:0.00px;top:-12.00px;font-size:14px;color:#181d1f;letter-spacing:-0.262px;transform-origin:0 0;transform:translate(2244.2px,897.4px) rotate(90deg);left:0;top:0;">Filtre</div>
<div class="t" style="left:39.50px;top:1007.00px;font-size:14px;color:#181d1f;letter-spacing:-0.314px;-webkit-text-stroke:0.45px currentColor;">Rader: 6</div>
</body></html>
